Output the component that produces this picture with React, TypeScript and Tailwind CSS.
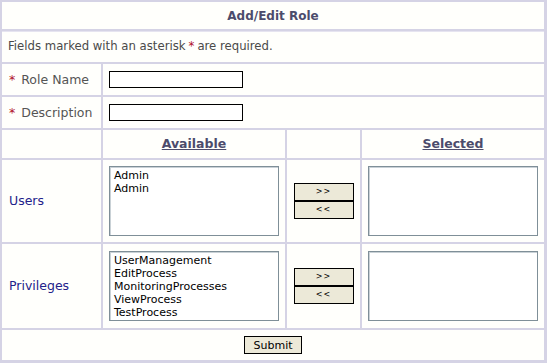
import React from "react";

const FONT = { fontFamily: '"DejaVu Sans", Verdana, sans-serif' };

function Req() {
  return <span className="text-[#b0102a] mr-[6px]">*</span>;
}

function ListBox({ items }: { items: string[] }) {
  return (
    <div className="w-[170px] h-[70px] border border-[#7f8f98] bg-white shadow-[inset_1px_1px_0_#c9d1d6] pl-[4px] pt-[2px] text-[11px] leading-[13px] text-black overflow-hidden">
      {items.map((it, i) => (
        <div key={i}>{it}</div>
      ))}
    </div>
  );
}

function MoveButtons() {
  return (
    <div className="flex flex-col">
      <button className="w-[60px] h-[18px] border border-black bg-[#ece9d8] text-[8px] leading-none tracking-[1px] text-black">
        &gt;&gt;
      </button>
      <button className="w-[60px] h-[18px] border border-black bg-[#ece9d8] text-[8px] leading-none tracking-[1px] text-black">
        &lt;&lt;
      </button>
    </div>
  );
}

export default function App() {
  const cell = "bg-[#fffffc] flex items-center";
  return (
    <div style={FONT} className="w-[547px] h-[363px]">
      <div className="grid grid-cols-[99px_182px_73px_182px] grid-rows-[27px_31px_31px_31px_28px_82px_84px_30px] gap-[2px] bg-[#d5d3e5] pt-[2px] pl-[2px] pr-[3px] pb-[3px] h-[363px]">
        {/* title */}
        <div className={`${cell} col-span-4 justify-center text-[12px] font-bold text-[#4c4c6c]`}>
          Add/Edit Role
        </div>

        {/* notice */}
        <div className={`${cell} col-span-4 pl-[6px] pt-[1px] text-[11.7px] text-[#4a4a4a] shadow-[inset_0_1px_0_#e6e4f0]`}>
          Fields marked with an asterisk<span className="text-[#b0102a] mx-[3px]">*</span>are required.
        </div>

        {/* role name */}
        <div className={`${cell} pl-[7px] pt-[1px] text-[12.5px] text-[#555]`}>
          <Req />
          Role Name
        </div>
        <div className={`${cell} col-span-3 pl-[6px]`}>
          <input className="w-[134px] h-[17px] border border-black bg-white outline-none" />
        </div>

        {/* description */}
        <div className={`${cell} pl-[7px] pt-[1px] text-[12.5px] text-[#555]`}>
          <Req />
          Description
        </div>
        <div className={`${cell} col-span-3 pl-[6px]`}>
          <input className="w-[134px] h-[17px] border border-black bg-white outline-none" />
        </div>

        {/* headers */}
        <div className={cell}></div>
        <div className={`${cell} justify-center text-[12.5px] font-bold underline text-[#4c4c6c]`}>
          Available
        </div>
        <div className={cell}></div>
        <div className={`${cell} justify-center text-[12.5px] font-bold underline text-[#4c4c6c]`}>
          Selected
        </div>

        {/* users */}
        <div className={`${cell} pl-[7px] text-[12.5px] text-[#22228a]`}>Users</div>
        <div className={`${cell} justify-center`}>
          <ListBox items={["Admin", "Admin"]} />
        </div>
        <div className={`${cell} justify-center`}>
          <MoveButtons />
        </div>
        <div className={`${cell} justify-center`}>
          <ListBox items={[]} />
        </div>

        {/* privileges */}
        <div className={`${cell} pl-[7px] text-[12.5px] text-[#22228a]`}>Privileges</div>
        <div className={`${cell} justify-center`}>
          <ListBox
            items={["UserManagement", "EditProcess", "MonitoringProcesses", "ViewProcess", "TestProcess"]}
          />
        </div>
        <div className={`${cell} justify-center`}>
          <MoveButtons />
        </div>
        <div className={`${cell} justify-center`}>
          <ListBox items={[]} />
        </div>

        {/* submit */}
        <div className={`${cell} col-span-4 justify-center`}>
          <button className="w-[58px] h-[18px] border border-black bg-[#ece9d8] text-[11px] leading-none text-black">
            Submit
          </button>
        </div>
      </div>
    </div>
  );
}
